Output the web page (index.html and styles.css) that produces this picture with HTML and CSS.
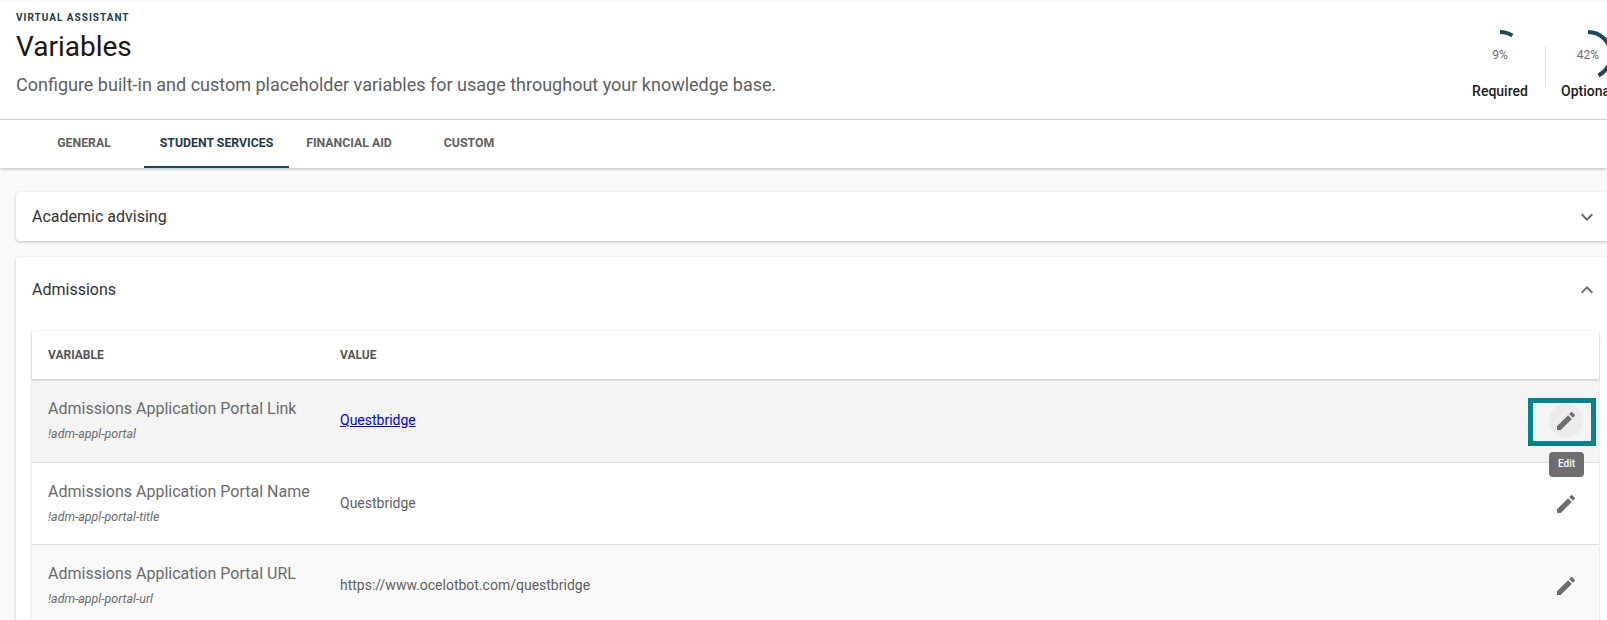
FILE: index.html
```html
<!DOCTYPE html>
<html>
<head>
	<title>Variables</title>
	<link rel="stylesheet" href="styles.css">
</head>
<body>
	<header class="page-header">
		<div class="titles">
			<div class="eyebrow">VIRTUAL ASSISTANT</div>
			<h1>Variables</h1>
			<p>Configure built-in and custom placeholder variables for usage throughout your knowledge base.</p>
		</div>
		<div class="stats">
			<div class="stat">
				<div class="ring">
					<svg width="54" height="54" viewBox="0 0 54 54"><circle cx="27" cy="27" r="23" fill="none" stroke="#1d4a5a" stroke-width="4" stroke-dasharray="13 132" transform="rotate(-90 27 27)"/></svg>
					<span>9%</span>
				</div>
				<div class="stat-name">Required</div>
			</div>
			<div class="stat stat-optional">
				<div class="ring">
					<svg width="54" height="54" viewBox="0 0 54 54"><circle cx="27" cy="27" r="23" fill="none" stroke="#1d4a5a" stroke-width="4" stroke-dasharray="61 84" transform="rotate(-90 27 27)"/></svg>
					<span>42%</span>
				</div>
				<div class="stat-name">Optional</div>
			</div>
		</div>
	</header>

	<nav class="tabs">
		<a href="#" class="tab">GENERAL</a>
		<a href="#" class="tab active">STUDENT SERVICES</a>
		<a href="#" class="tab tab-short">FINANCIAL AID</a>
		<a href="#" class="tab tab-short">CUSTOM</a>
	</nav>

	<main class="content">
		<section class="card card-closed">
			<div class="card-head">
				<span>Academic advising</span>
				<svg class="chevron" width="24" height="24" viewBox="0 0 24 24"><path d="M7.41 8.59 12 13.17l4.59-4.58L18 10l-6 6-6-6z"/></svg>
			</div>
		</section>

		<section class="card">
			<div class="card-head">
				<span>Admissions</span>
				<svg class="chevron" width="24" height="24" viewBox="0 0 24 24"><path d="M7.41 15.41 12 10.83l4.59 4.58L18 14l-6-6-6 6z"/></svg>
			</div>
			<div class="table">
				<div class="row row-head">
					<div>VARIABLE</div>
					<div>VALUE</div>
				</div>
				<div class="row row-hover">
					<div class="var">
						<div class="var-name">Admissions Application Portal Link</div>
						<div class="var-key">!adm-appl-portal</div>
					</div>
					<div class="value"><a href="#">Questbridge</a></div>
					<div class="action">
						<span class="edit-btn edit-btn-on">
							<svg width="24" height="24" viewBox="0 0 24 24"><path d="M3 17.25V21h3.75L17.81 9.94l-3.75-3.75L3 17.25zM20.71 7.04a1 1 0 0 0 0-1.41l-2.34-2.34a1 1 0 0 0-1.41 0l-1.83 1.83 3.75 3.75 1.83-1.83z"/></svg>
						</span>
						<div class="focus-box"></div>
						<div class="tooltip">Edit</div>
					</div>
				</div>
				<div class="row">
					<div class="var">
						<div class="var-name">Admissions Application Portal Name</div>
						<div class="var-key">!adm-appl-portal-title</div>
					</div>
					<div class="value">Questbridge</div>
					<div class="action">
						<span class="edit-btn">
							<svg width="24" height="24" viewBox="0 0 24 24"><path d="M3 17.25V21h3.75L17.81 9.94l-3.75-3.75L3 17.25zM20.71 7.04a1 1 0 0 0 0-1.41l-2.34-2.34a1 1 0 0 0-1.41 0l-1.83 1.83 3.75 3.75 1.83-1.83z"/></svg>
						</span>
					</div>
				</div>
				<div class="row row-alt">
					<div class="var">
						<div class="var-name">Admissions Application Portal URL</div>
						<div class="var-key">!adm-appl-portal-url</div>
					</div>
					<div class="value">https://www.ocelotbot.com/questbridge</div>
					<div class="action">
						<span class="edit-btn">
							<svg width="24" height="24" viewBox="0 0 24 24"><path d="M3 17.25V21h3.75L17.81 9.94l-3.75-3.75L3 17.25zM20.71 7.04a1 1 0 0 0 0-1.41l-2.34-2.34a1 1 0 0 0-1.41 0l-1.83 1.83 3.75 3.75 1.83-1.83z"/></svg>
						</span>
					</div>
				</div>
			</div>
		</section>
	</main>
</body>
</html>
```

FILE: styles.css
```css
html, body {
  margin: 0;
  height: 620px;
  overflow: hidden;
}

body {
  background-color: #f9f9f9;
  font-family: Roboto, "Liberation Sans", sans-serif;
  color: #5f5f5f;
}

.page-header {
  display: flex;
  justify-content: space-between;
  height: 117px;
  margin-top: 2px;
  background-color: #fff;
  border-bottom: 1px solid #dcdcdc;
}

.titles {
  padding: 9px 0 0 16px;
}

.eyebrow {
  font-size: 10px;
  line-height: 14px;
  font-weight: 700;
  letter-spacing: 1px;
  color: #1d3c48;
}

h1 {
  margin: 4px 0 0;
  font-size: 28px;
  line-height: 36px;
  font-weight: 400;
  color: #1c1410;
}

.titles p {
  margin: 8px 0 0;
  font-size: 18px;
  line-height: 24px;
  color: #5f5f5f;
}

.stats {
  display: flex;
  width: 170px;
  flex: none;
  margin-right: -18px;
  padding-top: 26px;
}

.stat {
  position: relative;
  width: 90px;
  flex: none;
  text-align: center;
}

.stat-optional {
  width: 64px;
  padding-left: 16px;
  text-align: left;
}

.stat-optional::before {
  content: "";
  position: absolute;
  left: 0;
  top: 18px;
  height: 40px;
  border-left: 1px solid #dcdcdc;
}

.ring {
  position: relative;
  width: 54px;
  height: 54px;
  margin: 0 auto;
}

.stat-optional .ring {
  margin: 0;
}

.ring span {
  position: absolute;
  inset: 0;
  display: flex;
  align-items: center;
  justify-content: center;
  font-size: 12px;
  color: #6b6b6b;
}

.stat-name {
  margin-top: 1px;
  font-size: 14px;
  line-height: 16px;
  font-weight: 500;
  color: #1c1c1c;
  white-space: nowrap;
}

.tabs {
  display: flex;
  height: 48px;
  background-color: #fff;
  box-shadow: 0 1px 3px rgba(0, 0, 0, 0.25);
}

.tab {
  display: flex;
  align-items: center;
  justify-content: center;
  width: 145px;
  box-sizing: border-box;
  font-size: 12.3px;
  font-weight: 700;
  color: #5f5f5f;
  text-decoration: none;
  padding-bottom: 2px;
}

.tab:first-child {
  width: 144px;
  padding-left: 24px;
}

.tab.active {
  color: #1d3c48;
  border-bottom: 2px solid #1d4a5a;
  padding-bottom: 0;
}

.tab-short {
  width: 120px;
}

.content {
  padding: 24px 0 0 16px;
}

.card {
  background-color: #fff;
  border-radius: 4px 0 0 4px;
  box-shadow: 0 1px 3px rgba(0, 0, 0, 0.25);
  margin-bottom: 16px;
}

.card-head {
  display: flex;
  align-items: center;
  justify-content: space-between;
  height: 49px;
  padding: 0 8px 0 16px;
  font-size: 16px;
  color: #333;
}

.card:not(.card-closed) .card-head {
  height: 65px;
}

.chevron {
  fill: #6e6e6e;
}

.table {
  margin: 9px 8px 0 16px;
  background-color: #fff;
  border-radius: 4px 4px 0 0;
  box-shadow: 0 1px 3px rgba(0, 0, 0, 0.2);
}

.row {
  display: grid;
  grid-template-columns: 292px 1fr 66px;
  align-items: center;
  height: 81px;
  padding-left: 16px;
  border-bottom: 1px solid #dedede;
}

.row-head {
  height: 48px;
  font-size: 12px;
  font-weight: 700;
  color: #555;
  border-bottom: none;
  box-shadow: 0 1px 2px rgba(0, 0, 0, 0.2);
  position: relative;
}

.row-hover {
  background-color: #f4f4f4;
  height: 83px;
}

.row-alt {
  background-color: #f9f9f9;
}

.var-name {
  font-size: 16px;
  line-height: 20px;
  color: #6b6b6b;
}

.var-key {
  margin-top: 7px;
  font-size: 12.4px;
  line-height: 16px;
  font-style: italic;
  color: #6b6b6b;
}

.value {
  padding-bottom: 2px;
  font-size: 14px;
  color: #5f5f5f;
}

.value a {
  color: #0000ee;
}

.action {
  position: relative;
  display: flex;
  justify-content: center;
}

.edit-btn {
  display: flex;
  align-items: center;
  justify-content: center;
  width: 34px;
  height: 34px;
  border-radius: 50%;
}

.edit-btn svg {
  fill: #6e6e6e;
}

.edit-btn-on {
  background-color: #ebebeb;
}

/* focus outline drawn on top of the button in the capture */
.focus-box {
  position: absolute;
  left: -5px;
  top: -6px;
  width: 58px;
  height: 38px;
  border: 5px solid #00838a;
}

.tooltip {
  position: absolute;
  top: 48px;
  left: 16px;
  width: 35px;
  height: 25px;
  line-height: 24px;
  border-radius: 4px;
  background-color: #6e6e6e;
  color: #fff;
  font-size: 10px;
  font-weight: 500;
  text-align: center;
  z-index: 3;
}
```
